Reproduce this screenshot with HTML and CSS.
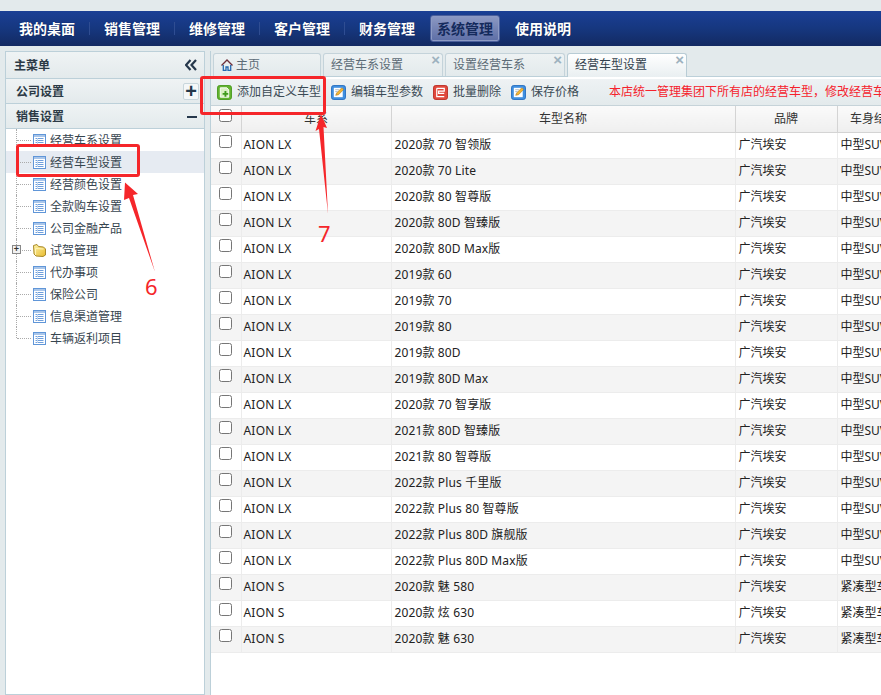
FILE: index.html
```html
<!DOCTYPE html>
<html lang="zh">
<head>
<meta charset="utf-8">
<title>经营车型设置</title>
<link rel="stylesheet" href="styles.css">
</head>
<body>
<svg width="0" height="0" class="defs">
  <symbol id="i-doc" viewBox="0 0 13 13"><rect x="0.5" y="0.5" width="12" height="12" fill="#fff" stroke="#6096d8"/><rect x="1" y="1" width="11" height="2" fill="#a9c6ea"/><path d="M2.500 4.500h8M2.500 6.500h8M2.500 8.500h8M2.500 10.500h8" stroke="#6f9fdc" fill="none"/><path d="M4.500 4v7" stroke="#c3d7ef" fill="none"/></symbol>
  <symbol id="i-edit" viewBox="0 0 16 16"><rect x="0.500" y="0.500" width="15" height="15" rx="2.500" fill="#3f8fe0" stroke="#2a6fc0"/><rect x="3" y="3" width="9.500" height="10" fill="#fff"/><path d="M5 11l1-2.500L11.500 3l2 1.800L8 10.400z" fill="#f2b632" stroke="#a8701a" stroke-width=".6"/><path d="M4.500 5h4M4.500 7h2.500" stroke="#9ab" stroke-width=".8"/></symbol>
</svg>
<header class="topbar">
  <nav class="nav">
    <a class="nav-item">我的桌面</a><i class="nav-sep"></i>
    <a class="nav-item">销售管理</a><i class="nav-sep"></i>
    <a class="nav-item">维修管理</a><i class="nav-sep"></i>
    <a class="nav-item">客户管理</a><i class="nav-sep"></i>
    <a class="nav-item">财务管理</a>
    <a class="nav-item active">系统管理</a>
    <a class="nav-item">使用说明</a>
  </nav>
</header>
<div class="layout">
  <aside class="side">
    <div class="side-title"><span>主菜单</span>
      <svg class="collapse" width="12" height="12" viewBox="0 0 12 12"><path d="M5.500 1L1 6l4.500 5M11 1L6.500 6l4.500 5" fill="none" stroke="#26384c" stroke-width="2.200"/></svg>
    </div>
    <div class="side-group"><span>公司设置</span><b class="plus">+</b></div>
    <div class="side-group open"><span>销售设置</span><b class="minus"></b></div>
    <ul class="tree">
      <li class="tree-row"><i class="dots"></i><svg class="tree-ic"><use href="#i-doc"/></svg><span>经营车系设置</span></li>
      <li class="tree-row selected"><i class="dots"></i><svg class="tree-ic"><use href="#i-doc"/></svg><span>经营车型设置</span></li>
      <li class="tree-row"><i class="dots"></i><svg class="tree-ic"><use href="#i-doc"/></svg><span>经营颜色设置</span></li>
      <li class="tree-row"><i class="dots"></i><svg class="tree-ic"><use href="#i-doc"/></svg><span>全款购车设置</span></li>
      <li class="tree-row"><i class="dots"></i><svg class="tree-ic"><use href="#i-doc"/></svg><span>公司金融产品</span></li>
      <li class="tree-row"><i class="dots"><b class="expander">+</b></i>
        <svg class="tree-ic" viewBox="0 0 13 13"><defs><linearGradient id="folder" x1="0" y1="0" x2="1" y2="1"><stop offset="0" stop-color="#fdf3a8"/><stop offset="1" stop-color="#e8bb2e"/></linearGradient></defs><path d="M.5 1.500L4 .5l1.500 2 5 .5 2 2v6l-2.500 1.500-7-.5-2-2z" fill="url(#folder)" stroke="#a88a2c"/><path d="M2.500 11V4.500l8 .5" fill="none" stroke="#fff4b8"/></svg><span>试驾管理</span></li>
      <li class="tree-row"><i class="dots"></i><svg class="tree-ic"><use href="#i-doc"/></svg><span>代办事项</span></li>
      <li class="tree-row"><i class="dots"></i><svg class="tree-ic"><use href="#i-doc"/></svg><span>保险公司</span></li>
      <li class="tree-row"><i class="dots"></i><svg class="tree-ic"><use href="#i-doc"/></svg><span>信息渠道管理</span></li>
      <li class="tree-row last"><i class="dots"></i><svg class="tree-ic"><use href="#i-doc"/></svg><span>车辆返利项目</span></li>
    </ul>
  </aside>
  <main class="main">
    <div class="tabs">
      <div class="tab home">
        <svg width="12" height="12" viewBox="0 0 12 12"><path d="M.5 6.500L6 1l5.500 5.500" fill="none" stroke="#6e2f3a" stroke-width="1.400"/><path d="M2.300 6v5.300h2.700V8h2v3.300h2.700V6" fill="none" stroke="#2468b0" stroke-width="1.300"/></svg>
        <span>主页</span></div>
      <div class="tab"><span>经营车系设置</span><b class="close">×</b></div>
      <div class="tab"><span>设置经营车系</span><b class="close">×</b></div>
      <div class="tab active"><span>经营车型设置</span><b class="close">×</b></div>
    </div>
    <div class="toolbar">
      <a class="tool add"><svg width="15" height="15" viewBox="0 0 16 16"><rect x="0.500" y="0.500" width="15" height="15" rx="2.500" fill="#62b32e" stroke="#4a9a20"/><path d="M3.500 3h7l2 2v8h-9z" fill="#d8f0c0" stroke="#fff"/><path d="M9 6.500v6M6 9.500h6" stroke="#3f9a1c" stroke-width="2"/></svg><span>添加自定义车型</span></a>
      <a class="tool edit"><svg width="15" height="15"><use href="#i-edit"/></svg><span>编辑车型参数</span></a>
      <a class="tool del"><svg width="15" height="15" viewBox="0 0 16 16"><rect x="0.500" y="0.500" width="15" height="15" rx="2.500" fill="#e0483c" stroke="#bb2f25"/><path d="M4 3.500h8v3H6v2.500h6M4 3.500v9h8" fill="none" stroke="#fff" stroke-width="1.300"/></svg><span>批量删除</span></a>
      <a class="tool save"><svg width="15" height="15"><use href="#i-edit"/></svg><span>保存价格</span></a>
      <span class="notice">本店统一管理集团下所有店的经营车型，修改经营车型</span>
    </div>
    <table class="grid">
      <colgroup><col class="c-check"><col class="c-series"><col class="c-name"><col class="c-brand"><col class="c-body"></colgroup>
      <thead><tr><th><input type="checkbox"></th><th>车系</th><th>车型名称</th><th>品牌</th><th>车身结构</th></tr></thead>
      <tbody>
        <tr><td><input type="checkbox"></td><td>AION LX</td><td>2020款 70 智领版</td><td>广汽埃安</td><td>中型SUV</td></tr>
        <tr><td><input type="checkbox"></td><td>AION LX</td><td>2020款 70 Lite</td><td>广汽埃安</td><td>中型SUV</td></tr>
        <tr><td><input type="checkbox"></td><td>AION LX</td><td>2020款 80 智尊版</td><td>广汽埃安</td><td>中型SUV</td></tr>
        <tr><td><input type="checkbox"></td><td>AION LX</td><td>2020款 80D 智臻版</td><td>广汽埃安</td><td>中型SUV</td></tr>
        <tr><td><input type="checkbox"></td><td>AION LX</td><td>2020款 80D Max版</td><td>广汽埃安</td><td>中型SUV</td></tr>
        <tr><td><input type="checkbox"></td><td>AION LX</td><td>2019款 60</td><td>广汽埃安</td><td>中型SUV</td></tr>
        <tr><td><input type="checkbox"></td><td>AION LX</td><td>2019款 70</td><td>广汽埃安</td><td>中型SUV</td></tr>
        <tr><td><input type="checkbox"></td><td>AION LX</td><td>2019款 80</td><td>广汽埃安</td><td>中型SUV</td></tr>
        <tr><td><input type="checkbox"></td><td>AION LX</td><td>2019款 80D</td><td>广汽埃安</td><td>中型SUV</td></tr>
        <tr><td><input type="checkbox"></td><td>AION LX</td><td>2019款 80D Max</td><td>广汽埃安</td><td>中型SUV</td></tr>
        <tr><td><input type="checkbox"></td><td>AION LX</td><td>2020款 70 智享版</td><td>广汽埃安</td><td>中型SUV</td></tr>
        <tr><td><input type="checkbox"></td><td>AION LX</td><td>2021款 80D 智臻版</td><td>广汽埃安</td><td>中型SUV</td></tr>
        <tr><td><input type="checkbox"></td><td>AION LX</td><td>2021款 80 智尊版</td><td>广汽埃安</td><td>中型SUV</td></tr>
        <tr><td><input type="checkbox"></td><td>AION LX</td><td>2022款 Plus 千里版</td><td>广汽埃安</td><td>中型SUV</td></tr>
        <tr><td><input type="checkbox"></td><td>AION LX</td><td>2022款 Plus 80 智尊版</td><td>广汽埃安</td><td>中型SUV</td></tr>
        <tr><td><input type="checkbox"></td><td>AION LX</td><td>2022款 Plus 80D 旗舰版</td><td>广汽埃安</td><td>中型SUV</td></tr>
        <tr><td><input type="checkbox"></td><td>AION LX</td><td>2022款 Plus 80D Max版</td><td>广汽埃安</td><td>中型SUV</td></tr>
        <tr><td><input type="checkbox"></td><td>AION S</td><td>2020款 魅 580</td><td>广汽埃安</td><td>紧凑型车</td></tr>
        <tr><td><input type="checkbox"></td><td>AION S</td><td>2020款 炫 630</td><td>广汽埃安</td><td>紧凑型车</td></tr>
        <tr><td><input type="checkbox"></td><td>AION S</td><td>2020款 魅 630</td><td>广汽埃安</td><td>紧凑型车</td></tr>
      </tbody>
    </table>
  </main>
</div>
<div class="mark mark-tool"></div>
<div class="mark mark-tree"></div>
<svg class="arrows" width="881" height="695" viewBox="0 0 881 695">
  <path d="M125 182.500L138 194L133 195L155 272L129 198L124 200z" fill="#f5262a"/>
  <path d="M321 114L327 128L323.500 127L328 214L319 129L315.500 131z" fill="#f5262a"/>
</svg>
<span class="num num-6">6</span>
<span class="num num-7">7</span>
</body>
</html>
```

FILE: styles.css
```css
* { box-sizing: border-box; }
html, body { margin: 0; height: 100%; }
body {
  width: 881px; height: 695px; overflow: hidden; position: relative;
  background: #e3eaec; color: #222;
  font: 12px/1.2 "Noto Sans", "Noto Sans CJK SC", sans-serif;
  padding-top: 11px;
}
.defs { position: absolute; }
.topbar {
  height: 35px;
  background: linear-gradient(#1a3f95, #16377f 50%, #132a62);
}
.nav { display: flex; align-items: center; height: 35px; padding-left: 12px; }
.nav-item {
  color: #fff; font-size: 14px; font-weight: 700; line-height: 26px; height: 26px;
  padding: 0 7px; text-shadow: 0 0 1px #0b1c4d;
}
.nav-sep { width: 1px; height: 13px; background: #2f4d92; margin: 0 7px; }
.nav-item.active {
  margin: 0 8px; padding: 0; width: 70px; height: 27px; text-align: center;
  background: linear-gradient(#8d99c3, #5d6ea6); color: #142a5c; text-shadow: none;
  border: 1px solid #4b5f9c; border-radius: 3px; line-height: 25px; box-shadow: inset 0 0 0 1px #8c9ac4;
}
.layout { display: flex; padding: 5px 0 0 5px; gap: 5px; height: 649px; }
.side { width: 200px; flex: none; border: 1px solid #bcd0d9; background: #fff; }
.side-title, .side-group {
  display: flex; align-items: center; justify-content: space-between;
  background: linear-gradient(#eff3f4, #e3eaec);
  border-bottom: 1px solid #bcd0d9; color: #2c3a46; font-weight: 700; padding-top: 2px;
}
.side-title { height: 27px; padding-left: 8px; padding-right: 6px; }
.side-group { height: 25px; padding-left: 10px; padding-right: 4px; }
.collapse { margin: -2px 1px 0 0; }
.plus {
  width: 16px; height: 17px; margin: -2px 1px 0 0; text-align: center;
  font: 700 20px/15px "Liberation Sans", sans-serif; color: #23374a;
  border: 1px solid #c8d6dc; border-radius: 2px; background: #f4f7f8;
}
.minus { width: 10px; height: 2px; background: #26384c; margin-right: 3px; }
.tree { list-style: none; margin: 0; padding: 0; color: #37454f; }
.tree-row { display: flex; align-items: center; height: 22px; position: relative; padding-left: 27px; }
.tree-row span { padding-top: 2px; }
.tree-ic { width: 13px; height: 13px; margin-right: 4px; flex: none; }
.dots {
  position: absolute; left: 10px; top: 0; width: 16px; height: 22px;
  border-left: 1px dotted #aaa;
}
.dots::after { content: ""; position: absolute; left: 0; top: 11px; width: 14px; border-top: 1px dotted #aaa; }
.last .dots { height: 11px; }
.selected { background: #e6ebf2; }
.expander {
  position: absolute; left: -5px; top: 6px; width: 9px; height: 9px; z-index: 1;
  background: #f2f2f2; border: 1px solid #888; font: 700 9px/7px "Liberation Sans", sans-serif; text-align: center; color: #333;
}
.main { flex: 1; min-width: 0; border-left: 1px solid #bcd0d9; background: #fff; overflow: hidden; }
.tabs { display: flex; gap: 2px; padding: 2px 0 0 2px; height: 26px; background: #e3eaec; border-bottom: 1px solid #bcd0d9; }
.tab {
  position: relative; display: flex; align-items: center; gap: 4px; width: 120px; height: 23px; padding-left: 7px;
  background: linear-gradient(#eef2f3, #e3eaec); color: #5c6b76;
  border: 1px solid #c4d3da; border-bottom: 0; border-radius: 3px 3px 0 0;
}
.tab.home { width: 108px; gap: 3px; }
.tab.active { background: linear-gradient(#fff, #e9eff1); color: #33424e; border-color: #b8ccd5; height: 24px; }
.close { position: absolute; right: 2px; top: -2px; font: 700 15px/15px "Liberation Sans", sans-serif; color: #9db2bf; }
.toolbar {
  display: flex; align-items: center; height: 27px; margin-top: 2px; white-space: nowrap;
  padding-left: 6px; background: linear-gradient(#eef2f4, #e3eaec); border-bottom: 1px solid #c6d3d9; color: #3a4a55;
}
.tool { display: flex; align-items: center; gap: 5px; margin-right: 10px; }
.tool svg { flex: none; }
.notice { color: #f5222d; margin-left: 20px; }
.grid { width: 700px; table-layout: fixed; border-collapse: collapse; font-size: 12px; }
.c-check { width: 30px; } .c-series { width: 150px; } .c-name { width: 344px; } .c-brand { width: 102px; } .c-body { width: 74px; }
.grid th {
  height: 26px; font-weight: 400; color: #333; padding: 0; text-align: center; overflow: hidden;
  background: linear-gradient(#fafafa, #efefef); border-right: 1px solid #d4d4d4; border-bottom: 1px solid #d4d4d4;
  white-space: nowrap;
}
.grid td {
  height: 26px; padding: 0 0 0 3px; white-space: nowrap; overflow: hidden; color: #222;
  border-right: 1px solid #ececec; border-bottom: 1px solid #ececec;
}
.grid td:nth-child(2) { padding-left: 2px; letter-spacing: .2px; }
.grid td:nth-child(3) { letter-spacing: .13px; }
.grid tbody tr:nth-child(even) td { background: #f4f4f4; }
.grid input { display: block; width: 13px; height: 13px; margin: 0 0 0 8px; position: relative; top: -3px; }
.grid td input { top: -4px; }
.grid td:first-child, .grid th:first-child { padding: 0; }
.mark { position: absolute; border: 3px solid #f5262a; border-radius: 3px; }
.mark-tool { left: 200px; top: 76px; width: 126px; height: 39px; }
.mark-tree { left: 16px; top: 144px; width: 124px; height: 33px; }
.arrows { position: absolute; left: 0; top: 0; pointer-events: none; }
.num { position: absolute; color: #f5262a; font: 22px/28px "Noto Sans", sans-serif; }
.num-6 { left: 145px; top: 272px; }
.num-7 { left: 318px; top: 219px; }
```
